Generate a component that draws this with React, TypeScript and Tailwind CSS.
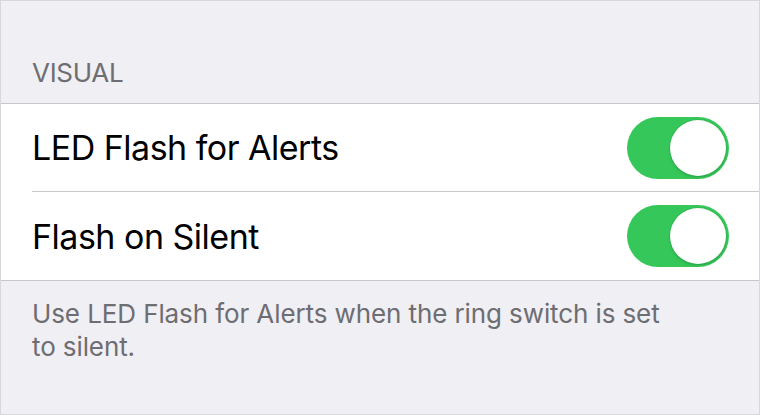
import { useState } from 'react';

type Row = { id: string; label: string };

const rows: Row[] = [
  { id: 'led', label: 'LED Flash for Alerts' },
  { id: 'silent', label: 'Flash on Silent' },
];

function Toggle({ on, onChange }: { on: boolean; onChange: () => void }) {
  return (
    <button
      onClick={onChange}
      className={`relative w-[102px] h-[62px] rounded-full transition-colors ${on ? 'bg-[#35c759]' : 'bg-[#e5e5ea]'}`}
    >
      <span
        className={`absolute top-[3px] w-[56px] h-[56px] rounded-full bg-white shadow-[0_0_0_1px_rgba(0,0,0,0.06),0_2px_3px_rgba(0,0,0,0.12)] transition-all ${on ? 'left-[43px]' : 'left-[3px]'}`}
      />
    </button>
  );
}

export default function App() {
  const [values, setValues] = useState<Record<string, boolean>>({ led: true, silent: true });

  return (
    <div
      className="w-[760px] h-[415px] bg-[#efeff4] border border-[#d8d8dc] flex flex-col overflow-hidden"
      style={{ fontFamily: 'Inter, Roboto, "Liberation Sans", sans-serif' }}
    >
      {/* Section header */}
      <div className="h-[102px] flex items-end px-[31px] pb-[17px]">
        <span className="text-[26px] leading-none text-[#6d6d72] tracking-[-0.3px]">VISUAL</span>
      </div>

      {/* Group */}
      <div className="bg-white border-y border-[#c8c7cc]">
        {rows.map((row, i) => (
          <div key={row.id} className="pl-[31px]">
            <div
              className={`h-[88px] flex items-center justify-between pr-[30px] ${i < rows.length - 1 ? 'border-b border-[#c8c7cc]' : ''}`}
            >
              <span className="text-[34px] text-black tracking-[-0.5px]">{row.label}</span>
              <Toggle on={values[row.id]} onChange={() => setValues(v => ({ ...v, [row.id]: !v[row.id] }))} />
            </div>
          </div>
        ))}
      </div>

      {/* Footer note */}
      <p className="px-[31px] pt-[16px] text-[26px] leading-[33px] text-[#6d6d72] tracking-[-0.1px] max-w-[690px]">
        Use LED Flash for Alerts when the ring switch is set to silent.
      </p>
    </div>
  );
}
